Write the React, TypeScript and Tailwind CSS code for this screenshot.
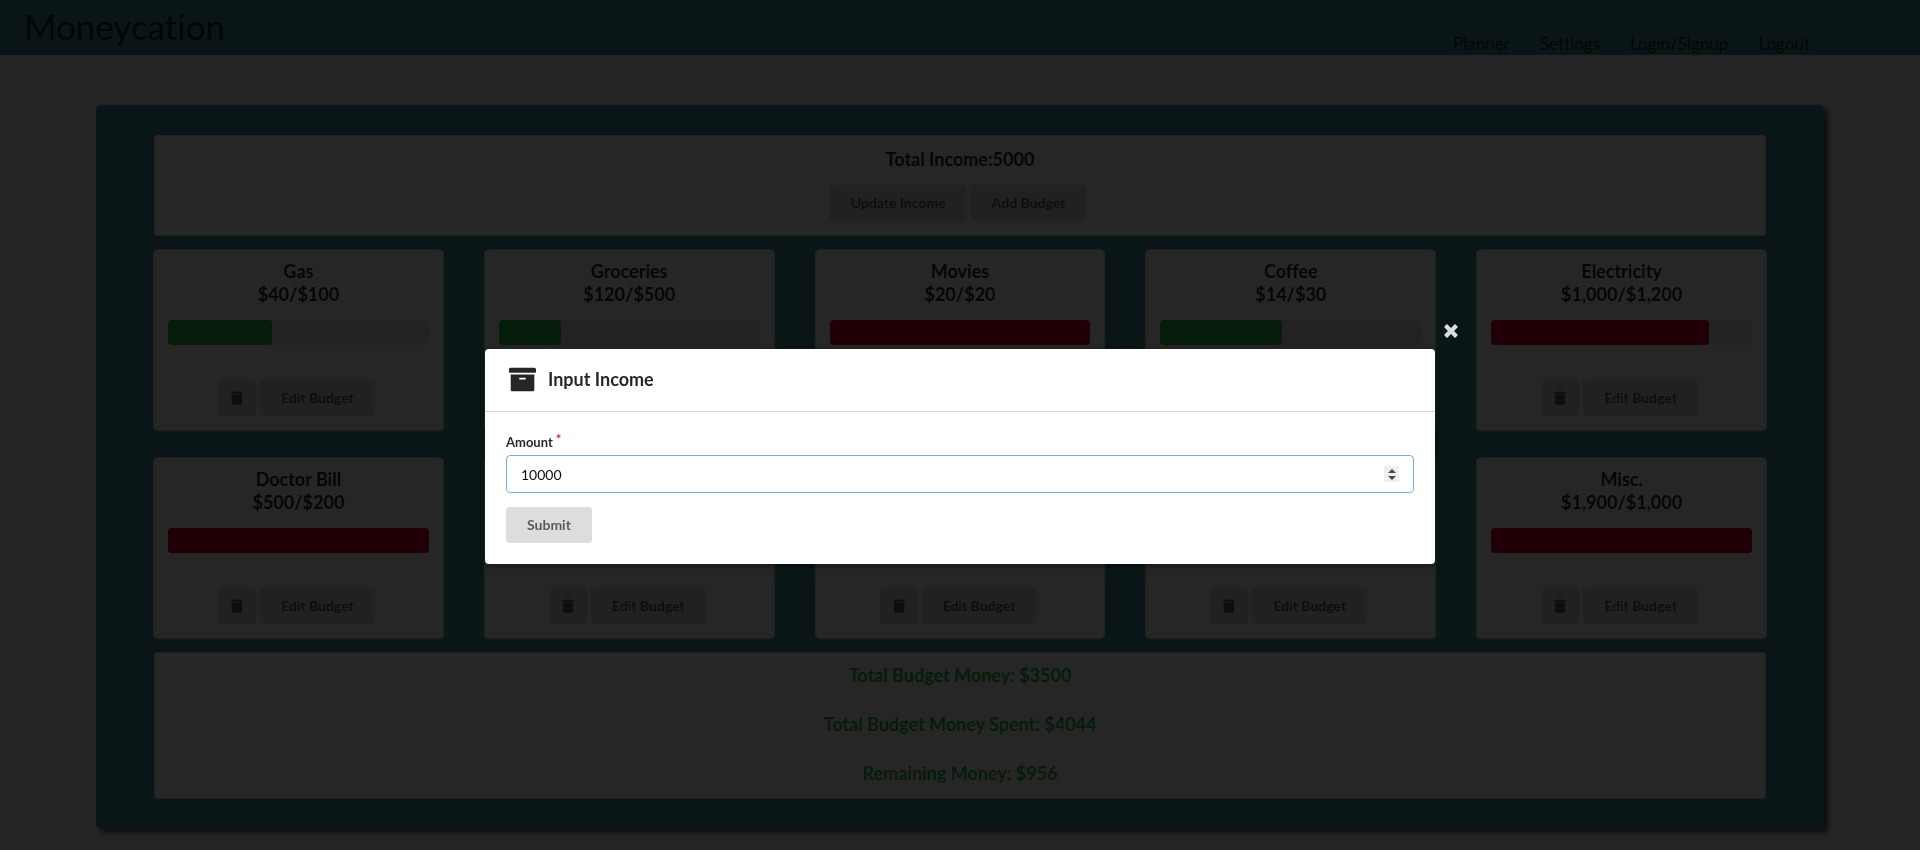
import React, { useRef } from "react";
import { FaArchive } from "react-icons/fa";

type Budget = { name: string; spent: number; total: number };

const budgets: Budget[] = [
  { name: "Gas", spent: 40, total: 100 },
  { name: "Groceries", spent: 120, total: 500 },
  { name: "Movies", spent: 20, total: 20 },
  { name: "Coffee", spent: 14, total: 30 },
  { name: "Electricity", spent: 1000, total: 1200 },
  { name: "Doctor Bill", spent: 500, total: 200 },
  { name: "Clothes", spent: 150, total: 200 },
  { name: "Internet", spent: 60, total: 60 },
  { name: "Phone", spent: 240, total: 390 },
  { name: "Misc.", spent: 1900, total: 1000 },
];

const navLinks = ["Planner", "Settings", "Login/Signup", "Logout"];

const money = (n: number) => "$" + n.toLocaleString("en-US");

function TrashIcon() {
  return (
    <svg viewBox="0 0 448 512" className="h-3.5 w-3" fill="currentColor" aria-hidden="true">
      <path d="M0 84V56c0-13.3 10.7-24 24-24h112l9.4-18.7c4-8.2 12.3-13.3 21.4-13.3h114.3c9.1 0 17.4 5.1 21.5 13.3L312 32h112c13.3 0 24 10.7 24 24v28c0 6.6-5.4 12-12 12H12C5.4 96 0 90.6 0 84zm416 56v324c0 26.5-21.5 48-48 48H80c-26.5 0-48-21.5-48-48V140c0-6.6 5.4-12 12-12h360c6.6 0 12 5.4 12 12z" />
    </svg>
  );
}

function CloseIcon() {
  return (
    <svg viewBox="0 0 384 512" className="h-[18px] w-3.5" fill="currentColor" aria-hidden="true">
      <path d="M323.1 441l53.9-53.9c9.4-9.4 9.4-24.5 0-33.9L279.8 256l97.2-97.2c9.4-9.4 9.4-24.5 0-33.9L323.1 71c-9.4-9.4-24.5-9.4-33.9 0L192 168.2 94.8 71c-9.4-9.4-24.5-9.4-33.9 0L7 124.9c-9.4 9.4-9.4 24.5 0 33.9l97.2 97.2L7 353.2c-9.4 9.4-9.4 24.5 0 33.9L60.9 441c9.4 9.4 24.5 9.4 33.9 0l97.2-97.2 97.2 97.2c9.3 9.3 24.5 9.3 33.9 0z" />
    </svg>
  );
}

function Button({ children, type = "button" }: { children: React.ReactNode; type?: "button" | "submit" }) {
  return (
    <button
      type={type}
      className="mr-1 h-9 rounded bg-[#dcddde] px-[21px] pb-px text-sm font-bold text-black/60 hover:bg-[#cacbcd]"
    >
      {children}
    </button>
  );
}

function BudgetCard({ name, spent, total }: Budget) {
  const ratio = Math.min(spent / total, 1);
  const fill = ratio >= 0.8 ? "bg-[#d4002d]" : "bg-[#21ba45]";
  return (
    <article className="flex flex-col rounded bg-white px-3.5 pt-2.5 pb-3.5 text-center shadow-[0_0_0_1px_#d4d4d5,0_1px_3px_0_#d4d4d5]">
      <h2 className="text-lg/[23px] font-bold text-black/85">
        {name}
        <br />
        {money(spent)}/{money(total)}
      </h2>
      <div className="mt-3.5 h-[25px] rounded bg-black/10">
        <div className={"h-full rounded " + fill} style={{ width: `${ratio * 100}%` }} />
      </div>
      <div className="mt-[35px] flex justify-center">
        <button
          type="button"
          aria-label={"Delete " + name}
          className="mr-1 flex h-9 w-[38px] items-center justify-center rounded bg-[#dcddde] text-black/60 hover:bg-[#cacbcd]"
        >
          <TrashIcon />
        </button>
        <Button>Edit Budget</Button>
      </div>
    </article>
  );
}

function AmountField() {
  const ref = useRef<HTMLInputElement>(null);
  return (
    <div className="relative">
      <input
        ref={ref}
        id="amount"
        type="number"
        required
        defaultValue={10000}
        className="block h-[38px] w-full rounded border border-[#7bb0d6] px-3.5 text-sm text-black/95 outline-none [appearance:textfield]"
      />
      <div className="absolute inset-y-0 right-[15px] flex items-center">
        <div className="flex h-4 w-[15px] flex-col bg-[#efefef] text-[#484848]">
          <button
            type="button"
            aria-label="Increase amount"
            className="flex h-2 items-end justify-center pb-px"
            onClick={() => ref.current?.stepUp()}
          >
            <svg viewBox="0 0 8 4" className="h-1 w-2" fill="currentColor" aria-hidden="true">
              <path d="M0 4L4 0l4 4z" />
            </svg>
          </button>
          <button
            type="button"
            aria-label="Decrease amount"
            className="flex h-2 items-start justify-center pt-0.5"
            onClick={() => ref.current?.stepDown()}
          >
            <svg viewBox="0 0 8 4" className="h-1 w-2" fill="currentColor" aria-hidden="true">
              <path d="M0 0l4 4 4-4z" />
            </svg>
          </button>
        </div>
      </div>
    </div>
  );
}

function IncomeModal() {
  return (
    <div className="fixed inset-0 flex items-center justify-center bg-black/85 pt-[63px]">
      <div
        role="dialog"
        aria-modal="true"
        aria-labelledby="income-title"
        className="relative w-full max-w-[950px] rounded bg-white shadow-[1px_3px_3px_0_rgba(0,0,0,0.2),1px_3px_15px_2px_rgba(0,0,0,0.2)]"
      >
        <button type="button" aria-label="Close" className="absolute -top-[27px] -right-[23px] text-white/85">
          <CloseIcon />
        </button>
        <header className="flex h-[63px] items-center gap-3 border-b border-[#d4d4d5] px-6 pb-px text-black/85">
          <FaArchive className="size-[27px]" />
          <h1 id="income-title" className="pb-px text-lg font-bold">
            Input Income
          </h1>
        </header>
        <form className="p-[21px]" onSubmit={(e) => e.preventDefault()}>
          <label htmlFor="amount" className="mb-1 block text-[13px]/[18px] font-bold text-black/85">
            Amount<span className="ml-[3px] inline-block -translate-y-[3px] text-[#db2828]">*</span>
          </label>
          <AmountField />
          <div className="mt-3.5 flex">
            <Button type="submit">Submit</Button>
          </div>
        </form>
      </div>
    </div>
  );
}

export default function App() {
  return (
    <div className="min-h-screen overflow-hidden bg-[#f7e6ea] pb-5 font-[Lato,sans-serif] text-sm text-black/85 [font-variant-ligatures:none]">
      <header className="flex h-[55px] items-start justify-between bg-[#419094] pr-[110px] pl-6">
        <span className="text-[35px]/[52px] text-black/70">Moneycation</span>
        <nav className="flex gap-[30px] pt-8 text-[17px]/[23px] text-black/70">
          {navLinks.map((label) => (
            <a key={label} href="#">
              {label}
            </a>
          ))}
        </nav>
      </header>
      <main className="mx-[5%] mt-[50px] rounded-[5px] bg-[#419094] px-[58px] py-[30px] shadow-[4px_4px_5px_rgba(0,0,0,0.6)]">
        <section className="rounded border border-[#22242626] bg-white pt-3 pb-3.5 text-center">
          <h2 className="text-lg/[23px] font-bold text-black/85">Total Income:5000</h2>
          <div className="mt-3.5 flex justify-center">
            <Button>Update Income</Button>
            <Button>Add Budget</Button>
          </div>
        </section>
        <section className="mt-3.5 grid grid-cols-5 gap-x-[42px] gap-y-7">
          {budgets.map((b) => (
            <BudgetCard key={b.name} {...b} />
          ))}
        </section>
        <section className="mt-3.5 flex flex-col gap-[26px] rounded border border-[#22242626] bg-white pt-[11px] pb-[13px] text-center text-lg/[23px] font-bold text-[#21ba45]">
          <p>Total Budget Money: $3500</p>
          <p>Total Budget Money Spent: $4044</p>
          <p>Remaining Money: $956</p>
        </section>
      </main>
      <IncomeModal />
    </div>
  );
}
